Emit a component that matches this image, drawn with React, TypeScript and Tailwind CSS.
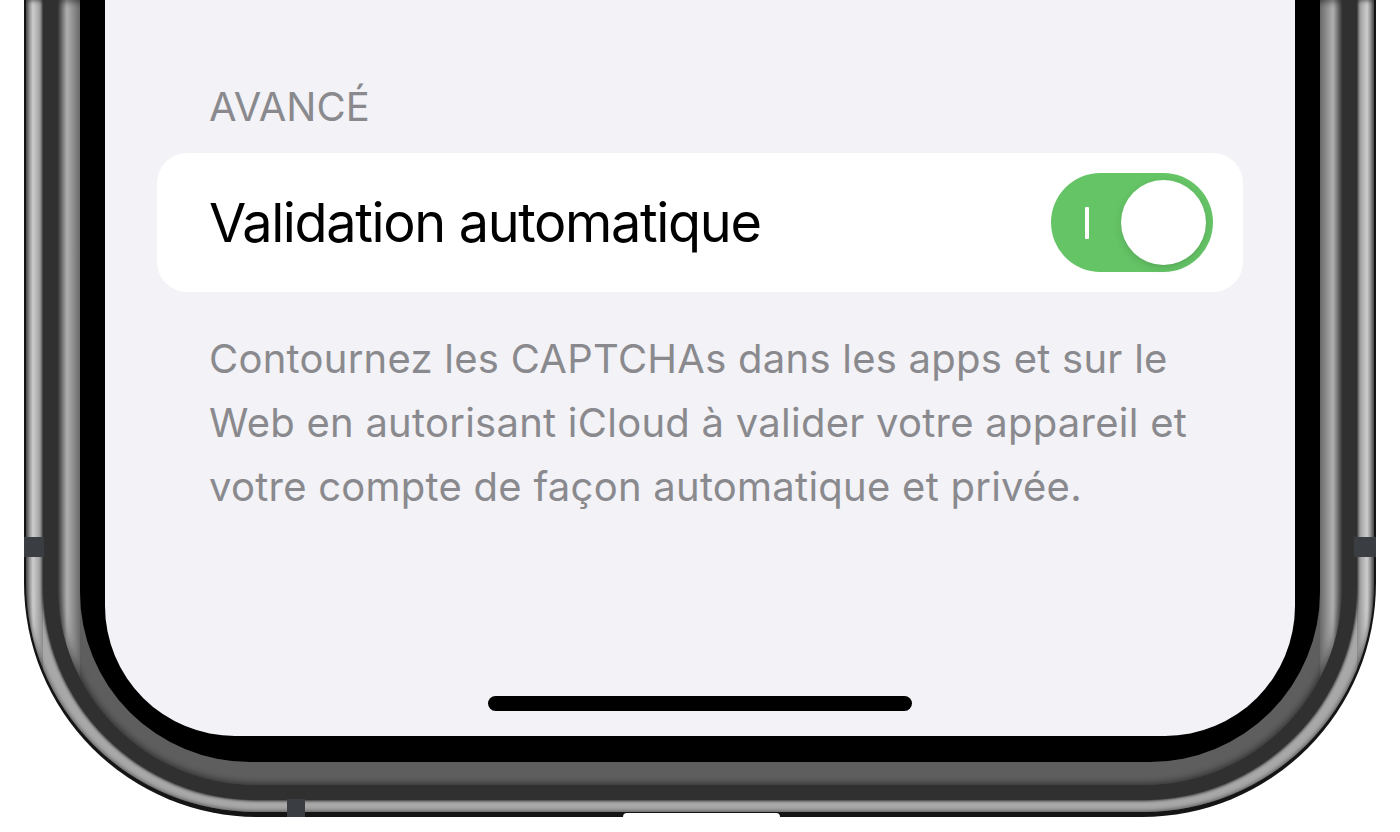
import React from 'react';

const font = { fontFamily: 'Inter, "Noto Sans", "Liberation Sans", sans-serif' };

function Toggle() {
  return (
    <div className="flex h-[99px] w-[162px] shrink-0 items-center rounded-full bg-[#65c466] pl-[34px] pr-[7px]">
      <div className="h-[32px] w-[4px] rounded-[1px] bg-white" />
      <div className="ml-auto h-[85px] w-[85px] rounded-full bg-white shadow-[0_3px_8px_rgba(0,0,0,0.12),0_1px_1px_rgba(0,0,0,0.05)]" />
    </div>
  );
}

function Screen() {
  return (
    <div className="flex h-full flex-col rounded-b-[130px] bg-[#f2f2f7]" style={font}>
      <div className="px-[52px] pt-[83px]">
        <div className="px-[52px] text-[40px] leading-[48px] text-[#8a8a8e]">AVANCÉ</div>
        <div className="mt-[22px] flex h-[139px] items-center justify-between rounded-[30px] bg-white pl-[52px] pr-[30px]">
          <span className="text-[54px] leading-[64px] tracking-[-1.35px] text-black">Validation automatique</span>
          <Toggle />
        </div>
        <p className="mt-[35px] px-[52px] text-[40px] leading-[64px] tracking-[0.25px] text-[#8a8a8e]">
          Contournez les CAPTCHAs dans les apps et sur le Web en autorisant iCloud à valider votre appareil et
          votre compte de façon automatique et privée.
        </p>
      </div>
      <div className="mt-auto mb-[25px] h-[15px] w-[424px] self-center rounded-full bg-black" />
    </div>
  );
}

export default function App() {
  return (
    <div className="h-[832px] w-[1400px] overflow-hidden bg-white pl-[24px]">
      <div className="relative h-[817px] w-[1352px]">
        {/* outer edge */}
        <div className="h-full rounded-b-[234px] bg-[#151515] px-[2px] pb-[5px]">
          {/* outer polished stripe */}
          <div className="h-full rounded-b-[230px] bg-[linear-gradient(90deg,#6a6a6a_0px,#cdcdcd_7px,#8c8c8c_17px,#a8a8a8_17px,#a8a8a8_calc(100%_-_17px),#8c8c8c_calc(100%_-_17px),#cdcdcd_calc(100%_-_7px),#6a6a6a_100%)] px-[17px] pb-[12px] shadow-[inset_0_0_4px_1px_rgba(0,0,0,0.5)]">
            {/* dark band */}
            <div className="h-full rounded-b-[214px] bg-[#303031] px-[15px] pb-[15px] shadow-[0_0_3px_1px_rgba(0,0,0,0.75)]">
              {/* inner band */}
              <div className="h-full rounded-b-[198px] bg-[linear-gradient(90deg,#555_0px,#b0b0b0_9px,#6a6a6a_22px,#5e5e5e_22px,#5e5e5e_calc(100%_-_22px),#6a6a6a_calc(100%_-_22px),#b0b0b0_calc(100%_-_9px),#555_100%)] px-[22px] pb-[23px] shadow-[inset_0_0_6px_2px_rgba(0,0,0,0.45)]">
                {/* black bezel */}
                <div className="h-full rounded-b-[170px] bg-black px-[25px] pb-[26px]">
                  <Screen />
                </div>
              </div>
            </div>
          </div>
        </div>
        {/* antenna bands */}
        <div className="absolute left-0 top-[537px] h-[20px] w-[20px] bg-[#3a3d42]" />
        <div className="absolute right-0 top-[537px] h-[20px] w-[22px] bg-[#3a3d42]" />
        <div className="absolute bottom-0 left-[263px] h-[18px] w-[18px] bg-[#3a3d42]" />
        {/* port cutout */}
        <div className="absolute bottom-0 left-[599px] h-[4px] w-[157px] rounded-t-[6px] bg-white" />
      </div>
    </div>
  );
}
